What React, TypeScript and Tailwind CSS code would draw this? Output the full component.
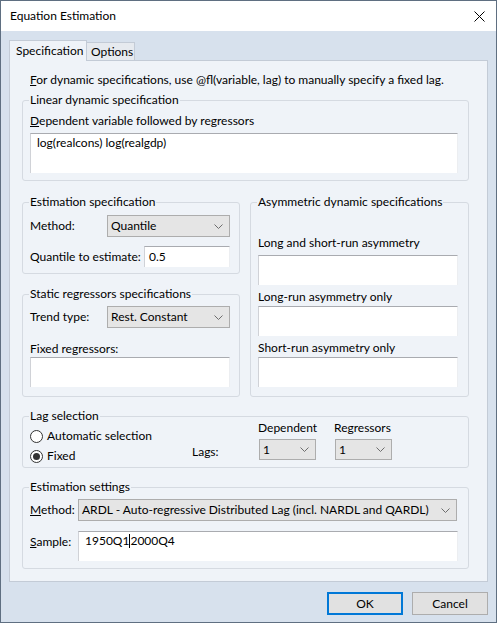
import React from "react";

function Chevron() {
  return (
    <svg width="9" height="5" viewBox="0 0 9 5" className="shrink-0">
      <polyline points="0.5,0.5 4.5,4.5 8.5,0.5" fill="none" stroke="#6d6d6d" strokeWidth="1" />
    </svg>
  );
}

function Select({ value, className = "" }: { value: string; className?: string }) {
  return (
    <div className={"flex items-center justify-between bg-[#e5e5e5] border border-[#adadad] pl-[3px] pr-[6px] " + className}>
      <span className="whitespace-nowrap">{value}</span>
      <Chevron />
    </div>
  );
}

function TextBox({ className = "", children }: { className?: string; children?: React.ReactNode }) {
  return (
    <div className={"bg-white border-t border-t-[#a9abb0] border-l border-l-[#d0d2d7] border-r border-r-[#eceef1] whitespace-nowrap " + className}>
      {children}
    </div>
  );
}

function Radio({ label, checked = false }: { label: string; checked?: boolean }) {
  return (
    <div className="flex items-center h-[20px] gap-[4px]">
      <span className="w-[13px] h-[13px] rounded-full border border-[#333333] bg-white flex items-center justify-center">
        {checked && <span className="w-[7px] h-[7px] rounded-full bg-[#333333]" />}
      </span>
      <span>{label}</span>
    </div>
  );
}

export default function App() {
  return (
    <div className="w-[497px] h-[623px] bg-[#d7e1ed] border border-[#5f6f81] flex flex-col font-['Lato',sans-serif] text-[12px] leading-[16px] text-black overflow-hidden whitespace-nowrap">
      <div className="h-[30px] bg-white flex items-center justify-between pl-[9px] pr-[11px] shrink-0">
        <span>Equation Estimation</span>
        <svg width="11" height="11" viewBox="0 0 11 11">
          <line x1="0.5" y1="0.5" x2="10.5" y2="10.5" stroke="#000" strokeWidth="1" />
          <line x1="10.5" y1="0.5" x2="0.5" y2="10.5" stroke="#000" strokeWidth="1" />
        </svg>
      </div>
      <div className="flex-1 px-[8px] pt-[9px] flex flex-col">
        <div className="flex items-end h-[20px] relative z-10">
          <div className="h-[21px] -mb-[1px] bg-[#eff3f8] border border-b-0 border-[#c3cbd6] pl-[6px] w-[78px] pt-[2px]">Specification</div>
          <div className="h-[18px] bg-[#e6eaef] border border-b-0 border-l-0 border-[#c3cbd6] w-[48px] pl-[4px] pt-[1px]">Options</div>
        </div>
        <div className="border border-[#c3cbd6] bg-[#eff3f8] pt-[11px] pl-[12px] pb-[12px]">
          <div className="ml-[8px]">
            <span className="underline">F</span>or dynamic specifications, use @fl(variable, lag) to manually specify a fixed lag.
          </div>

          <fieldset className="mt-[4px] w-[447px] border border-[#d5dae1] rounded-[3px]">
            <legend className="ml-[6px] px-[1px]">Linear dynamic specification</legend>
            <div className="pl-[7px] pr-[10px] pb-[7px]">
              <div className="mt-[5px]">
                <span className="underline">D</span>ependent variable followed by regressors
              </div>
              <TextBox className="mt-[4px] h-[40px] pl-[6px] pt-[1px]">log(realcons) log(realgdp)</TextBox>
            </div>
          </fieldset>

          <div className="mt-[13px] flex w-[447px] gap-[10px]">
            <div className="w-[218px] flex flex-col shrink-0">
              <fieldset className="border border-[#d5dae1] rounded-[3px]">
                <legend className="ml-[6px] px-[1px]">Estimation specification</legend>
                <div className="pl-[7px] pb-[6px]">
                  <div className="mt-[5px] flex items-center h-[22px]">
                    <span className="w-[77px]">Method:</span>
                    <Select value="Quantile" className="w-[123px] h-[22px]" />
                  </div>
                  <div className="mt-[9px] flex items-center h-[21px]">
                    <span className="w-[114px]">Quantile to estimate:</span>
                    <TextBox className="w-[86px] h-[21px] pl-[4px] flex items-center">0.5</TextBox>
                  </div>
                </div>
              </fieldset>
              <fieldset className="mt-[12px] border border-[#d5dae1] rounded-[3px]">
                <legend className="ml-[6px] px-[1px]">Static regressors specifications</legend>
                <div className="pl-[7px] pb-[9px]">
                  <div className="mt-[4px] flex items-center h-[22px]">
                    <span className="w-[77px]">Trend type:</span>
                    <Select value="Rest. Constant" className="w-[123px] h-[22px]" />
                  </div>
                  <div className="mt-[13px]">Fixed regressors:</div>
                  <TextBox className="h-[30px] w-[200px]" />
                </div>
              </fieldset>
            </div>
            <fieldset className="flex-1 border border-[#d5dae1] rounded-[3px]">
              <legend className="ml-[6px] px-[1px]">Asymmetric dynamic specifications</legend>
              <div className="pl-[7px] pb-[9px]">
                <div className="mt-[25px]">Long and short-run asymmetry</div>
                <TextBox className="mt-[4px] h-[30px] w-[200px]" />
                <div className="mt-[4px]">Long-run asymmetry only</div>
                <TextBox className="mt-[1px] h-[30px] w-[200px]" />
                <div className="mt-[4px]">Short-run asymmetry only</div>
                <TextBox className="mt-[1px] h-[30px] w-[200px]" />
              </div>
            </fieldset>
          </div>

          <fieldset className="mt-[11px] w-[447px] border border-[#d5dae1] rounded-[3px]">
            <legend className="ml-[6px] px-[1px]">Lag selection</legend>
            <div className="-mt-[4px] pl-[7px] pb-[1px] flex">
              <div className="w-[162px] pt-[6px]">
                <Radio label="Automatic selection" />
                <Radio label="Fixed" checked />
              </div>
              <div className="w-[66px] pt-[24px]">Lags:</div>
              <div className="w-[76px]">
                <div>Dependent</div>
                <Select value="1" className="mt-[3px] ml-[1px] w-[57px] h-[21px]" />
              </div>
              <div>
                <div>Regressors</div>
                <Select value="1" className="mt-[3px] ml-[1px] w-[57px] h-[21px]" />
              </div>
            </div>
          </fieldset>

          <fieldset className="mt-[11px] w-[447px] border border-[#d5dae1] rounded-[3px]">
            <legend className="ml-[6px] px-[1px]">Estimation settings</legend>
            <div className="pl-[7px] pb-[7px]">
              <div className="mt-[4px] flex items-center h-[22px]">
                <span className="w-[48px]">
                  <span className="underline">M</span>ethod:
                </span>
                <Select value="ARDL - Auto-regressive Distributed Lag (incl. NARDL and QARDL)" className="w-[379px] h-[22px]" />
              </div>
              <div className="mt-[10px] flex items-start">
                <span className="w-[48px] mt-[3px]">
                  <span className="underline">S</span>ample:
                </span>
                <TextBox className="w-[380px] h-[30px] pl-[6px] pt-[1px] flex items-start">
                  <span>1950Q1</span>
                  <span className="inline-block w-[1px] h-[14px] mt-[1px] bg-black" />
                  <span>2000Q4</span>
                </TextBox>
              </div>
            </div>
          </fieldset>
        </div>

        <div className="mt-[10px] flex justify-end gap-[9px]">
          <div className="w-[76px] h-[23px] bg-[#e1e1e1] border border-[#0078d7] shadow-[inset_0_0_0_1px_#0078d7] flex items-center justify-center">OK</div>
          <div className="w-[76px] h-[23px] bg-[#e1e1e1] border border-[#adadad] flex items-center justify-center">Cancel</div>
        </div>
      </div>
    </div>
  );
}
